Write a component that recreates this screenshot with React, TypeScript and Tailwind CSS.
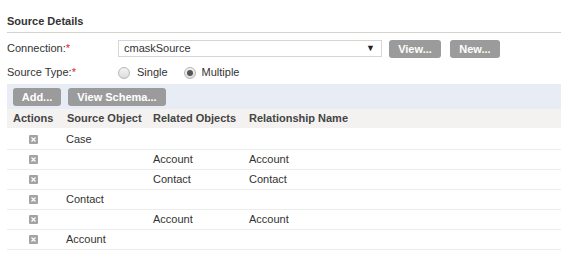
import React from "react";

const rows = [
  { source: "Case", related: "", name: "" },
  { source: "", related: "Account", name: "Account" },
  { source: "", related: "Contact", name: "Contact" },
  { source: "Contact", related: "", name: "" },
  { source: "", related: "Account", name: "Account" },
  { source: "Account", related: "", name: "" },
];

const GrayBtn = ({ text, w }: { text: string; w: string }) => (
  <button
    className={`h-[18px] ${w} rounded-[3px] bg-[#9b9b9b] text-[11px] font-bold leading-[18px] text-white`}
  >
    {text}
  </button>
);

const Radio = ({ checked }: { checked?: boolean }) => (
  <span className="flex h-[12px] w-[12px] items-center justify-center rounded-full border border-[#b5b5b5] bg-gradient-to-b from-[#f4f4f4] to-[#dcdcdc]">
    {checked ? <span className="h-[6px] w-[6px] rounded-full bg-[#555]" /> : null}
  </span>
);

const RemoveIcon = () => (
  <span className="flex h-[9px] w-[9px] items-center justify-center rounded-[1px] bg-[#a3a3a3]">
    <svg width="5" height="5" viewBox="0 0 5 5">
      <path d="M0.5 0.5L4.5 4.5M4.5 0.5L0.5 4.5" stroke="#fff" strokeWidth="1.2" />
    </svg>
  </span>
);

export default function App() {
  return (
    <div className="h-[260px] w-[588px] bg-white font-['Liberation_Sans',Arial,sans-serif] text-[11px] text-[#333]">
      <div className="ml-[7px] w-[554px] pt-[15px]">
        <div className="h-[18px] border-b border-[#d4d4cc] text-[11px] font-bold leading-[13px]">
          Source Details
        </div>

        <div className="mt-[5px] flex h-[21px] items-center">
          <div className="w-[111px]">
            Connection:<span className="text-[#e0202a]">*</span>
          </div>
          <div className="flex h-[17px] w-[264px] items-center justify-between border border-[#d6d6d6] pl-[5px] pr-[6px] text-[11px]">
            <span>cmaskSource</span>
            <span className="text-[9px] text-[#222]">▼</span>
          </div>
          <div className="ml-[7px]">
            <GrayBtn text="View..." w="w-[52px]" />
          </div>
          <div className="ml-[9px]">
            <GrayBtn text="New..." w="w-[50px]" />
          </div>
        </div>

        <div className="mt-[3px] flex h-[21px] items-center">
          <div className="w-[111px]">
            Source Type:<span className="text-[#e0202a]">*</span>
          </div>
          <Radio />
          <span className="ml-[7px]">Single</span>
          <span className="ml-[16px]">
            <Radio checked />
          </span>
          <span className="ml-[6px]">Multiple</span>
        </div>

        <div className="mt-[1px] flex h-[25px] items-center gap-[7px] bg-[#e8edf5] pl-[6px]">
          <GrayBtn text="Add..." w="w-[48px]" />
          <GrayBtn text="View Schema..." w="w-[98px]" />
        </div>

        <div className="grid h-[19px] grid-cols-[55px_86px_96px_1fr] items-center bg-[#f3f2f1] font-bold text-[#444]">
          <div className="pl-[6px]">Actions</div>
          <div className="pl-[5px]">Source Object</div>
          <div className="pl-[5px]">Related Objects</div>
          <div className="pl-[5px]">Relationship Name</div>
        </div>

        <div className="mt-[2px]">
          {rows.map((r, i) => (
            <div
              key={i}
              className="grid h-[20px] grid-cols-[55px_86px_96px_1fr] items-center border-b border-[#ececec]"
            >
              <div className="pl-[22px]">
                <RemoveIcon />
              </div>
              <div className="pl-[4px]">{r.source}</div>
              <div className="pl-[5px]">{r.related}</div>
              <div className="pl-[5px]">{r.name}</div>
            </div>
          ))}
        </div>
      </div>
    </div>
  );
}
